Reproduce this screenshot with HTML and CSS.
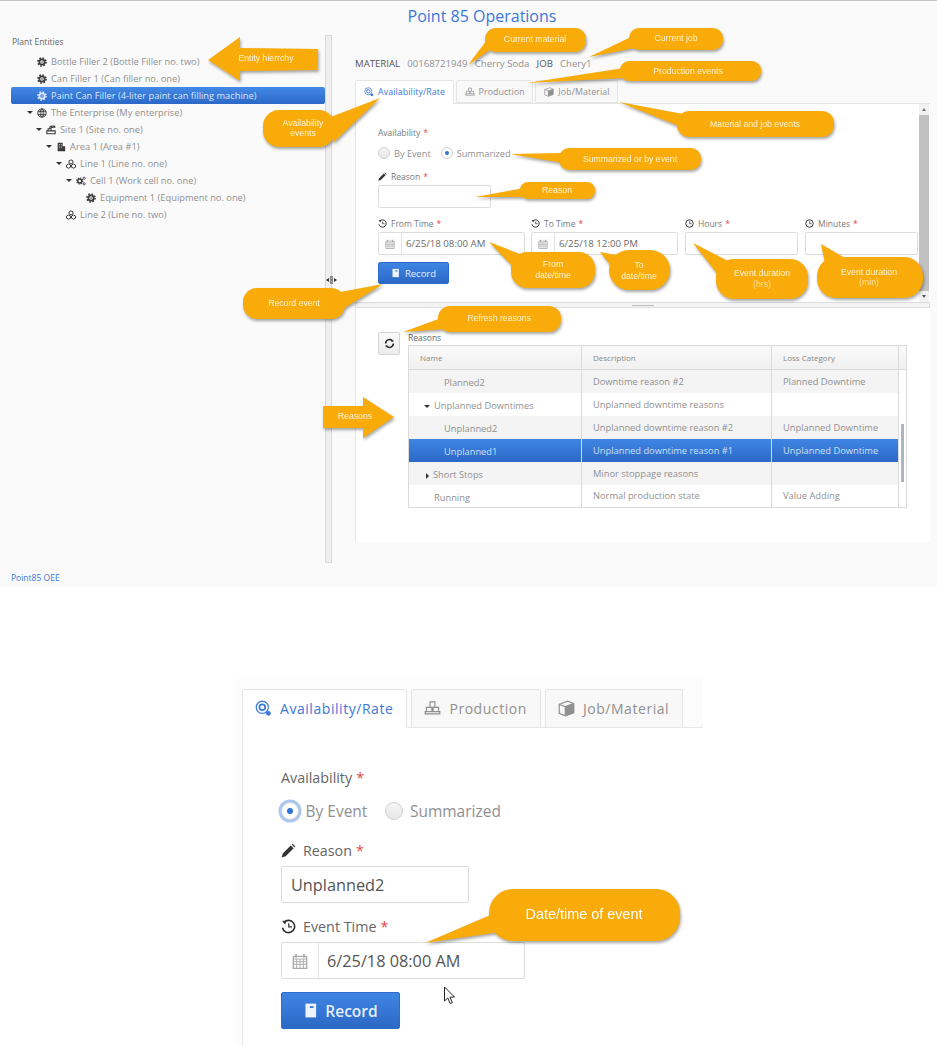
FILE: index.html
```html
<!DOCTYPE html>
<html lang="en">
<head>
  <meta charset="UTF-8" />
  <meta name="viewport" content="width=device-width, initial-scale=1.0"/>
  <title>Point 85 Operations</title>
  <link rel="stylesheet" href="styles.css">
</head>
<body>

  <svg class="defs" width="0" height="0">
    <symbol id="i-gear" viewBox="0 0 12 12">
      <circle cx="6" cy="6" r="3.2" fill="none" stroke="currentColor" stroke-width="2"/>
      <circle cx="6" cy="6" r="4.8" fill="none" stroke="currentColor" stroke-width="2" stroke-dasharray="1.9 1.87"/>
      <circle cx="6" cy="6" r="1" fill="currentColor"/>
    </symbol>
    <symbol id="i-globe" viewBox="0 0 12 12">
      <circle cx="6" cy="6" r="5" fill="none" stroke="currentColor" stroke-width="1.2"/>
      <ellipse cx="6" cy="6" rx="2.2" ry="5" fill="none" stroke="currentColor"/>
      <path d="M1 4.2h10M1 7.8h10M6 1v10" stroke="currentColor" stroke-width=".9"/>
    </symbol>
    <symbol id="i-site" viewBox="0 0 12 12">
      <path d="M1 7h10v3.5H1zM2.5 7V4.5h2V2.5C5.5 1.3 8 1 10.5 1.5v1.2C8.5 2.4 6.5 2.6 6 3.5V7" fill="none" stroke="currentColor" stroke-width="1.3"/>
    </symbol>
    <symbol id="i-building" viewBox="0 0 12 12">
      <path d="M2 1h6v10H2zM8 5h3v6H8z" fill="currentColor"/>
      <path d="M3.5 3h1M5.8 3h1M3.5 5h1M5.8 5h1M3.5 7h1M5.8 7h1" stroke="#fafafa"/>
    </symbol>
    <symbol id="i-cubes" viewBox="0 0 12 12">
      <path d="M6 1l2.3 1.2v2.5L6 6 3.7 4.7V2.2zM3 6l2.4 1.3v2.5L3 11 .6 9.8V7.3zM9 6l2.4 1.3v2.5L9 11 6.6 9.8V7.3z" fill="none" stroke="currentColor" stroke-width="1.2"/>
    </symbol>
    <symbol id="i-cogs" viewBox="0 0 12 12">
      <circle cx="4.5" cy="6" r="2.4" fill="none" stroke="currentColor" stroke-width="1.8"/>
      <circle cx="4.5" cy="6" r="3.7" fill="none" stroke="currentColor" stroke-width="1.3" stroke-dasharray="1.5 1.4"/>
      <circle cx="9.8" cy="2.6" r="1.3" fill="none" stroke="currentColor"/>
      <circle cx="9.8" cy="9.4" r="1.3" fill="none" stroke="currentColor"/>
    </symbol>
    <symbol id="i-pencil" viewBox="0 0 12 12">
      <path d="M.5 11.5l.9-3.2 6.4-6.4 2.3 2.3-6.4 6.4zM8.5 1.2l.8-.7 2.2 2.2-.7.8z" fill="currentColor"/>
    </symbol>
    <symbol id="i-history" viewBox="0 0 12 12">
      <path d="M2.3 2.8A4.9 4.9 0 1 1 1.2 7" fill="none" stroke="currentColor" stroke-width="1.3"/>
      <path d="M.8 1.3l3.2.2-.6 3.1z" fill="currentColor"/>
      <path d="M6.2 3.3v3h2.6" fill="none" stroke="currentColor"/>
    </symbol>
    <symbol id="i-clock" viewBox="0 0 12 12">
      <circle cx="6" cy="6" r="5" fill="none" stroke="currentColor" stroke-width="1.3"/>
      <path d="M6.2 3v3.3h2.6" fill="none" stroke="currentColor"/>
    </symbol>
    <symbol id="i-calendar" viewBox="0 0 12 12">
      <path d="M1 2.5h10v9H1z" fill="none" stroke="currentColor"/>
      <path d="M1 4.5h10M1 6.5h10M1 8.5h10M3.5 4.5v7M6 4.5v7M8.5 4.5v7" stroke="currentColor" stroke-width=".7"/>
      <path d="M3 .8v2.8M9 .8v2.8" stroke="currentColor" stroke-width="1.3"/>
    </symbol>
    <symbol id="i-book" viewBox="0 0 12 12">
      <path d="M2 .5h8.5v11H2z" fill="currentColor"/>
      <path d="M5.5 2.5h3V4h-3z" fill="#3a7bd9"/>
    </symbol>
    <symbol id="i-refresh" viewBox="0 0 12 12">
      <path d="M1.8 6a4.2 4.2 0 0 1 7.200-3M10.200 6a4.200 4.200 0 0 1-7.200 3" fill="none" stroke="currentColor" stroke-width="1.7"/>
      <path d="M10.200 1.700v2.500H7.700zM1.800 10.300V7.800h2.500z" fill="currentColor"/>
    </symbol>
    <symbol id="i-avail" viewBox="0 0 14 14">
      <circle cx="6" cy="6" r="5" fill="none" stroke="currentColor"/>
      <circle cx="6" cy="6" r="2.4" fill="none" stroke="currentColor" stroke-width="1.4"/>
      <circle cx="11" cy="11" r="2" fill="currentColor"/>
    </symbol>
    <symbol id="i-prod" viewBox="0 0 14 14">
      <path d="M1 9.5h12v2H1zM2 9.5V6h4.500v3.500M7.500 9.500V6H12v3.500M5 6V1.500h4V6" fill="none" stroke="currentColor"/>
    </symbol>
    <symbol id="i-box" viewBox="0 0 14 14">
      <path d="M1 3.5L8 1l5 2v7.5L6 13 1 11z" fill="none" stroke="currentColor"/>
      <path d="M1 3.5L6 5.5V13M6 5.5L13 3" fill="none" stroke="currentColor"/>
      <path d="M6 5.5L13 3v7.5L6 13z" fill="currentColor"/>
    </symbol>
  </svg>

  <section class="screen">
    <h1 class="title">Point 85 Operations</h1>
    <div class="columns">
      <aside class="entities">
        <div class="entities-head">Plant Entities</div>
        <ul class="tree">
          <li class="node depth-0"><span class="caret none"></span><svg class="node-icon"><use href="#i-gear"/></svg>Bottle Filler 2 (Bottle Filler no. two)</li>
          <li class="node depth-0"><span class="caret none"></span><svg class="node-icon"><use href="#i-gear"/></svg>Can Filler 1 (Can filler no. one)</li>
          <li class="node depth-0 selected"><span class="caret none"></span><svg class="node-icon"><use href="#i-gear"/></svg>Paint Can Filler (4-liter paint can filling machine)</li>
          <li class="node depth-0"><span class="caret"></span><svg class="node-icon"><use href="#i-globe"/></svg>The Enterprise (My enterprise)</li>
          <li class="node depth-1"><span class="caret"></span><svg class="node-icon"><use href="#i-site"/></svg>Site 1 (Site no. one)</li>
          <li class="node depth-2"><span class="caret"></span><svg class="node-icon"><use href="#i-building"/></svg>Area 1 (Area #1)</li>
          <li class="node depth-3"><span class="caret"></span><svg class="node-icon"><use href="#i-cubes"/></svg>Line 1 (Line no. one)</li>
          <li class="node depth-4"><span class="caret"></span><svg class="node-icon"><use href="#i-cogs"/></svg>Cell 1 (Work cell no. one)</li>
          <li class="node depth-5"><span class="caret none"></span><svg class="node-icon"><use href="#i-gear"/></svg>Equipment 1 (Equipment no. one)</li>
          <li class="node depth-3"><span class="caret none"></span><svg class="node-icon"><use href="#i-cubes"/></svg>Line 2 (Line no. two)</li>
        </ul>
      </aside>
      <div class="vsplit"></div>

      <main class="workspace">
        <div class="current">
          <b>MATERIAL</b><span>00168721949</span><span>Cherry Soda</span><b>JOB</b><span>Chery1</span>
        </div>
        <div class="tabs">
          <div class="tab active"><svg class="tab-icon"><use href="#i-avail"/></svg>Availability/Rate</div>
          <div class="tab"><svg class="tab-icon"><use href="#i-prod"/></svg>Production</div>
          <div class="tab"><svg class="tab-icon"><use href="#i-box"/></svg>Job/Material</div>
        </div>

        <div class="event-pane">
          <div class="event-form">
            <div class="label avail-label">Availability <i>*</i></div>
            <div class="radios">
              <span class="radio"></span><span class="radio-text">By Event</span>
              <span class="radio on"></span><span class="radio-text">Summarized</span>
            </div>
            <div class="label"><svg class="label-icon"><use href="#i-pencil"/></svg>Reason <i>*</i></div>
            <div class="box reason-box"></div>
            <div class="time-row">
              <div class="time-field wide">
                <div class="label"><svg class="label-icon"><use href="#i-history"/></svg>From Time <i>*</i></div>
                <div class="box date-box"><span class="date-cal"><svg class="cal-icon"><use href="#i-calendar"/></svg></span>6/25/18 08:00 AM</div>
              </div>
              <div class="time-field wide">
                <div class="label"><svg class="label-icon"><use href="#i-history"/></svg>To Time <i>*</i></div>
                <div class="box date-box"><span class="date-cal"><svg class="cal-icon"><use href="#i-calendar"/></svg></span>6/25/18 12:00 PM</div>
              </div>
              <div class="time-field">
                <div class="label"><svg class="label-icon"><use href="#i-clock"/></svg>Hours <i>*</i></div>
                <div class="box date-box"></div>
              </div>
              <div class="time-field">
                <div class="label"><svg class="label-icon"><use href="#i-clock"/></svg>Minutes <i>*</i></div>
                <div class="box date-box"></div>
              </div>
            </div>
            <button class="record"><svg class="record-icon"><use href="#i-book"/></svg>Record</button>
          </div>
          <div class="scrollbar"><span class="arrow up"></span><span class="thumb"></span><span class="arrow down"></span></div>
        </div>

        <div class="hsplit"><span></span></div>

        <div class="reasons-pane">
          <button class="refresh"><svg class="refresh-icon"><use href="#i-refresh"/></svg></button>
          <div class="reasons">
            <div class="reasons-title">Reasons</div>
            <div class="grid-wrap">
              <table class="grid">
                <thead>
                  <tr><th>Name</th><th>Description</th><th>Loss Category</th><th></th></tr>
                </thead>
                <tbody>
                  <tr class="alt"><td class="leaf">Planned2</td><td>Downtime reason #2</td><td>Planned Downtime</td><td></td></tr>
                  <tr><td class="group"><span class="caret"></span>Unplanned Downtimes</td><td>Unplanned downtime reasons</td><td></td><td></td></tr>
                  <tr class="alt"><td class="leaf">Unplanned2</td><td>Unplanned downtime reason #2</td><td>Unplanned Downtime</td><td></td></tr>
                  <tr class="picked"><td class="leaf">Unplanned1</td><td>Unplanned downtime reason #1</td><td>Unplanned Downtime</td><td></td></tr>
                  <tr class="alt"><td class="group"><span class="caret closed"></span>Short Stops</td><td>Minor stoppage reasons</td><td></td><td></td></tr>
                  <tr><td class="top">Running</td><td>Normal production state</td><td>Value Adding</td><td></td></tr>
                </tbody>
              </table>
              <span class="grid-thumb"></span>
            </div>
          </div>
        </div>
      </main>
    </div>
    <a class="footer-link">Point85 OEE</a>
  </section>

  <section class="detail">
    <div class="tabs big">
      <div class="tab active"><svg class="tab-icon"><use href="#i-avail"/></svg>Availability/Rate</div>
      <div class="tab"><svg class="tab-icon"><use href="#i-prod"/></svg>Production</div>
      <div class="tab"><svg class="tab-icon"><use href="#i-box"/></svg>Job/Material</div>
    </div>
    <div class="detail-form">
      <div class="label">Availability <i>*</i></div>
      <div class="radios">
        <span class="radio on focus"></span><span class="radio-text">By Event</span>
        <span class="radio"></span><span class="radio-text">Summarized</span>
      </div>
      <div class="label"><svg class="label-icon"><use href="#i-pencil"/></svg>Reason <i>*</i></div>
      <div class="box reason-box">Unplanned2</div>
      <div class="label"><svg class="label-icon"><use href="#i-history"/></svg>Event Time <i>*</i></div>
      <div class="box date-box"><span class="date-cal"><svg class="cal-icon"><use href="#i-calendar"/></svg></span>6/25/18 08:00 AM</div>
      <button class="record"><svg class="record-icon"><use href="#i-book"/></svg>Record</button>
    </div>
  </section>

  <!-- annotations drawn on top of the screenshots -->
  <svg class="callouts" width="937" height="1046" viewBox="0 0 937 1046">
    <polygon points="208,60 240,37 240,48 318,49 318,70 240,71 240,81"/>
    <text x="266" y="61">Entity hierrchy</text>

    <polygon points="380,98 328,118 334,142"/>
    <rect x="263" y="110" width="72" height="37" rx="16"/>
    <text x="303" y="126">Availability</text>
    <text x="303" y="136">events</text>

    <polygon points="468,65 487,40 490,50"/>
    <rect x="485" y="28" width="101" height="24" rx="11"/>
    <text x="535" y="42">Current material</text>

    <polygon points="589,57 631,37 635,48"/>
    <rect x="629" y="28" width="94" height="22" rx="10"/>
    <text x="676" y="41">Current job</text>

    <polygon points="527,83 624,68 624,78"/>
    <rect x="620" y="61" width="141" height="20" rx="9"/>
    <text x="688" y="74">Production events</text>

    <polygon points="619,102 683,114 681,127"/>
    <rect x="677" y="111" width="157" height="26" rx="12"/>
    <text x="755" y="127">Material and job events</text>

    <polygon points="510,154 563,153 563,163"/>
    <rect x="559" y="148" width="142" height="22" rx="10"/>
    <text x="630" y="162">Summarized or by event</text>

    <polygon points="475,197 524,188 526,197"/>
    <rect x="520" y="182" width="75" height="17" rx="8"/>
    <text x="557" y="193">Reason</text>

    <polygon points="489,242 525,256 516,270"/>
    <rect x="511" y="252" width="84" height="36" rx="16"/>
    <text x="553" y="267">From</text>
    <text x="553" y="278">date/time</text>

    <polygon points="600,252 622,256 614,270"/>
    <rect x="609" y="250" width="61" height="40" rx="20"/>
    <text x="639" y="268">To</text>
    <text x="639" y="279">date/time</text>

    <polygon points="693,243 730,262 722,280"/>
    <rect x="716" y="259" width="92" height="40" rx="18"/>
    <text x="762" y="276">Event duration</text>
    <text x="762" y="287" class="dim">(hrs)</text>

    <polygon points="821,244 845,258 826,268"/>
    <rect x="817" y="257" width="106" height="41" rx="19"/>
    <text x="869" y="275">Event duration</text>
    <text x="869" y="285" class="dim">(min)</text>

    <polygon points="383,284 335,293 338,312"/>
    <rect x="243" y="288" width="102" height="31" rx="14"/>
    <text x="294" y="306">Record event</text>

    <polygon points="403,332 444,317 446,329"/>
    <rect x="438" y="306" width="123" height="26" rx="12"/>
    <text x="499" y="321">Refresh reasons</text>

    <polygon points="323,406 363,406 363,397 394,417 363,438 363,428 323,428"/>
    <text x="355" y="419">Reasons</text>

    <polygon points="425,943 495,913 500,932"/>
    <rect x="489" y="889" width="191" height="52" rx="24"/>
    <text x="584" y="919" class="large">Date/time of event</text>
  </svg>

  <svg class="pointer" width="14" height="20" viewBox="0 0 14 20">
    <path d="M1.5 1v14l3.300-3 2.300 5.500 2.200-.9-2.300-5.400 4.500-.2z" fill="#fff" stroke="#222"/>
  </svg>
  <svg class="split-cursor" width="11" height="8" viewBox="0 0 11 8">
    <path d="M4.800 0v8M6.200 0v8" stroke="#333" stroke-width=".8"/>
    <path d="M0 4L3 2v4zM11 4L8 2v4z" fill="#333"/>
  </svg>

</body>
</html>
```

FILE: styles.css
```css
* {
  box-sizing: border-box;
}

body {
  margin: 0;
  height: 1046px;
  overflow: hidden;
  position: relative;
  background: white;
  font-family: "Open Sans", Arial, sans-serif;
  color: #909090;
}

.defs {
  position: absolute;
}

.screen {
  height: 587px;
  background: #fafafa;
  border-top: 1px solid #c4c4c4;
  position: relative;
}

.title {
  margin: 0;
  height: 34px;
  padding: 5px 0 0 27px;
  text-align: center;
  font-size: 16px;
  line-height: 20px;
  font-weight: 400;
  color: #3b78d8;
}

.columns {
  display: flex;
  height: 528px;
}

/* left tree */
.entities {
  width: 325px;
  padding: 1px 0 0 11px;
}

.entities-head {
  height: 17px;
  padding-left: 1px;
  font-size: 8.5px;
  line-height: 12px;
  color: #666;
}

.tree {
  list-style: none;
  margin: 0;
  padding: 0;
}

.node {
  height: 17px;
  display: flex;
  align-items: center;
  font-size: 9.3px;
  white-space: nowrap;
}

.node.selected {
  color: #dbe8fb;
  background: linear-gradient(#4389e6, #2b68c8);
  border-radius: 2px;
}

.node.selected .node-icon {
  color: #dbe8fb;
}

.depth-0 { padding-left: 16px; }
.depth-1 { padding-left: 25px; }
.depth-2 { padding-left: 35px; }
.depth-3 { padding-left: 45px; }
.depth-4 { padding-left: 55px; }
.depth-5 { padding-left: 65px; }

.caret {
  display: inline-block;
  width: 0;
  height: 0;
  margin: 0 4px 0 0;
  border-left: 3px solid transparent;
  border-right: 3px solid transparent;
  border-top: 3.5px solid #333;
}

.caret.none {
  border-top-color: transparent;
}

.caret.closed {
  border-top: 3px solid transparent;
  border-bottom: 3px solid transparent;
  border-left: 3.5px solid #333;
  border-right: none;
  margin-left: 2px;
}

.node-icon {
  width: 10px;
  height: 10px;
  margin-right: 4px;
  color: #3a3a3a;
  flex: none;
}

.vsplit {
  width: 7px;
  background: #efefef;
  border: 1px solid #d9d9d9;
}

/* right side */
.workspace {
  width: 575px;
  margin-left: 23px;
  margin-top: -1px;
}

.current {
  height: 46px;
  padding-top: 19px;
  display: flex;
  gap: 7.2px;
  font-size: 9.6px;
  line-height: 22px;
}

.current b {
  font-weight: 400;
  color: #555;
}

.tabs {
  display: flex;
  gap: 2px;
  height: 24px;
  border-bottom: 1px solid #e4e4e4;
}

.tab {
  display: flex;
  align-items: center;
  padding: 0 7.5px 0 8px;
  font-size: 8.8px;
  letter-spacing: .1px;
  background: #f8f8f8;
  border: 1px solid #e6e6e6;
  border-radius: 2px 2px 0 0;
  white-space: nowrap;
}

.tab.active {
  color: #3b78d8;
  background: white;
  border-bottom-color: white;
  height: 24px;
}

.tab-icon {
  width: 10px;
  height: 10px;
  margin-right: 4px;
}

.event-pane {
  display: flex;
  height: 198px;
  background: white;
  border-left: 1px solid #e4e4e4;
}

.event-form {
  flex: 1;
  padding: 22px 0 0 22px;
}

.label {
  display: flex;
  align-items: center;
  height: 12px;
  gap: 3px;
  font-size: 8.5px;
  color: #7a7a7a;
}

.label i {
  font-style: normal;
  color: #e04646;
}

.label-icon {
  width: 9px;
  height: 9px;
  color: #333;
  margin-right: 1px;
}

.radios {
  display: flex;
  align-items: center;
  margin: 9px 0 11px;
  height: 12px;
  font-size: 9.2px;
}

.radio {
  width: 12px;
  height: 12px;
  border-radius: 50%;
  border: 1px solid #cfcfcf;
  background: linear-gradient(#f6f6f6, #e6e6e6);
  position: relative;
}

.radio.on {
  background: white;
}

.radio.on::after {
  content: "";
  position: absolute;
  left: 3px;
  top: 3px;
  width: 4px;
  height: 4px;
  border-radius: 50%;
  background: #2f72d6;
}

.radio-text {
  margin: 0 10px 0 4px;
}

.box {
  border: 1px solid #dcdcdc;
  border-radius: 2px;
  background: white;
  font-size: 9.7px;
  color: #6a6a6a;
  display: flex;
  align-items: center;
}

.reason-box {
  width: 113px;
  height: 23px;
  margin: 3px 0 9px;
}

.time-row {
  display: flex;
  gap: 7px;
}

.time-field {
  width: 113px;
}

.time-field.wide {
  width: 147px;
}

.time-field.wide + .time-field.wide {
  margin-left: -1px;
}

.date-box {
  height: 23px;
  margin-top: 3px;
}

.date-cal {
  width: 23px;
  height: 100%;
  margin-right: 4px;
  display: flex;
  align-items: center;
  justify-content: center;
  border-right: 1px solid #e4e4e4;
}

.cal-icon {
  width: 10px;
  height: 10px;
  color: #aaa;
}

.record {
  display: flex;
  align-items: center;
  justify-content: center;
  margin-top: 7px;
  width: 71px;
  height: 22px;
  padding: 0;
  gap: 5px;
  font-family: inherit;
  font-size: 9.5px;
  color: #e5eefc;
  background: linear-gradient(#3f85e3, #2c68c6);
  border: 1px solid #2f6cc9;
  border-radius: 2px;
}

.record-icon {
  width: 9px;
  height: 10px;
  color: #eef4fd;
}

.scrollbar {
  width: 10px;
  margin-right: 1px;
  background: #f1f1f1;
  display: flex;
  flex-direction: column;
  justify-content: space-between;
  align-items: center;
}

.thumb {
  flex: 1;
  width: 100%;
  margin: 4px 0;
  background: #c1c1c1;
}

.arrow {
  margin-top: 4px;
  border-left: 2.5px solid transparent;
  border-right: 2.5px solid transparent;
  border-bottom: 3px solid #777;
}

.arrow.down {
  margin: 0 0 4px;
  border-bottom: none;
  border-top: 3px solid #555;
}

.hsplit {
  height: 6px;
  background: #f3f3f3;
  border: 1px solid #dedede;
  display: flex;
  justify-content: center;
  align-items: center;
}

.hsplit span {
  width: 22px;
  height: 1px;
  background: #bbb;
}

.reasons-pane {
  height: 234px;
  background: white;
  border-left: 1px solid #e8e8e8;
  display: flex;
  padding: 24px 0 0 22px;
  gap: 8px;
}

.refresh {
  width: 22px;
  height: 23px;
  padding: 0;
  display: flex;
  align-items: center;
  justify-content: center;
  background: linear-gradient(#fafafa, #ececec);
  border: 1px solid #d4d4d4;
  border-radius: 2px;
}

.refresh-icon {
  width: 11px;
  height: 11px;
  color: #222;
}

.reasons-title {
  height: 13px;
  font-size: 8.5px;
  line-height: 12px;
  color: #666;
}

.grid-wrap {
  position: relative;
  width: 499px;
}

.grid {
  width: 499px;
  table-layout: fixed;
  border-collapse: collapse;
  font-size: 9.3px;
  border: 1px solid #dadada;
  color: #909090;
}

.grid th {
  height: 24px;
  padding: 0 11px;
  text-align: left;
  font-weight: 400;
  font-size: 8px;
  color: #888;
  background: linear-gradient(#fafafa, #f0f0f0);
  border: 1px solid #dadada;
}

.grid th:nth-child(1) { width: 173px; }
.grid th:nth-child(2) { width: 190px; }
.grid th:nth-child(3) { width: 127px; }

.grid td {
  height: 23px;
  padding: 0 11px;
  border-left: 1px solid #dadada;
  white-space: nowrap;
  background: white;
}

.grid tr.alt td {
  background: #f4f4f4;
}

.grid tr.picked td {
  color: #cfe0f9;
  background: linear-gradient(#3f85e3, #2c68c6);
}

.grid tr td:last-child {
  background: white;
}

.grid td.leaf,
.grid td.group,
.grid td.top {
  padding-top: 3px;
}

.grid td.leaf {
  padding-left: 35px;
}

.grid td.group {
  padding-left: 15px;
}

.grid td.top {
  padding-left: 25px;
}

.grid .caret {
  vertical-align: middle;
}

.grid-thumb {
  position: absolute;
  left: 493px;
  top: 79px;
  width: 3px;
  height: 58px;
  background: #aeb4bb;
}

.footer-link {
  display: block;
  padding: 9px 0 0 11px;
  font-size: 8.5px;
  color: #3b78d8;
}

/* zoomed part under the screen */
.detail {
  margin: 92px 0 0 234px;
  width: 469px;
  height: 367px;
  padding: 10px 0 0 8px;
  background: #fcfcfc;
}

.tabs.big {
  height: 39px;
  gap: 4px;
  border-bottom: 1px solid #e6e6e6;
}

.tabs.big .tab {
  height: 39px;
  padding: 0 13px 0 12px;
  font-size: 14px;
  letter-spacing: .55px;
}

.tabs.big .tab-icon {
  width: 17px;
  height: 17px;
  margin-right: 8px;
}

.detail-form {
  height: 318px;
  padding: 41px 0 0 38px;
  background: white;
  border-left: 1px solid #e6e6e6;
}

.detail-form .label {
  height: 17px;
  font-size: 14.3px;
  gap: 4px;
  color: #666;
}

.detail-form .label-icon {
  width: 15px;
  height: 15px;
  margin-right: 3px;
}

.detail-form .radios {
  height: 20px;
  margin: 15px 0 21px;
  font-size: 15.5px;
}

.detail-form .radio {
  width: 18px;
  height: 18px;
}

.detail-form .radio.on::after {
  left: 5px;
  top: 5px;
  width: 6px;
  height: 6px;
}

.detail-form .radio.focus {
  box-shadow: 0 0 0 2.5px #a9c7f2;
}

.detail-form .radio-text {
  margin: 0 18px 0 6.5px;
}

.detail-form .box {
  font-size: 16.3px;
  color: #555;
}

.detail-form .reason-box {
  width: 188px;
  height: 37px;
  margin: 7px 0 15px;
  padding-left: 9px;
}

.detail-form .date-box {
  width: 244px;
  height: 37px;
  margin-top: 7px;
}

.detail-form .date-cal {
  width: 37px;
  margin-right: 8px;
}

.detail-form .cal-icon {
  width: 16px;
  height: 16px;
}

.detail-form .record {
  width: 119px;
  height: 37px;
  margin-top: 13px;
  gap: 7px;
  font-size: 15.5px;
  font-weight: 600;
}

.detail-form .record-icon {
  width: 15px;
  height: 17px;
}

/* callouts */
.callouts {
  position: absolute;
  left: 0;
  top: 0;
  filter: drop-shadow(1px 2px 1.5px rgba(0, 0, 0, 0.35));
}

.callouts polygon,
.callouts rect {
  fill: #f9ab0a;
}

.callouts text {
  font-family: "Liberation Sans", Arial, sans-serif;
  font-size: 8.7px;
  fill: #fff3d6;
  text-anchor: middle;
}

.callouts text.dim {
  fill: #fbe0a3;
}

.callouts text.large {
  font-size: 14.4px;
  fill: white;
}

.pointer {
  position: absolute;
  left: 443px;
  top: 986px;
}

.split-cursor {
  position: absolute;
  left: 326px;
  top: 276px;
}
```
